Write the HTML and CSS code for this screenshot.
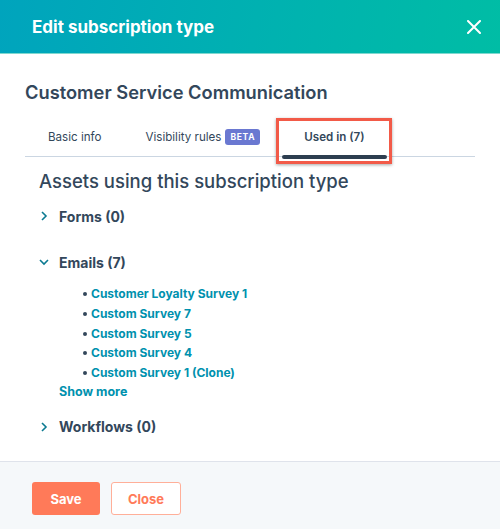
FILE: index.html
```html
<!DOCTYPE html>
<html lang="en">
<head>
  <meta charset="UTF-8">
  <title>Edit subscription type</title>
  <link rel="stylesheet" href="styles.css">
</head>
<body>
  <div class="modal">
    <div class="modal-header">
      <h1 class="modal-title">Edit subscription type</h1>
      <a class="close-btn" href="javascript:;">
        <svg width="14" height="14" viewBox="0 0 14 14"><path d="M1 1L13 13M13 1L1 13" stroke="#fff" stroke-width="2" stroke-linecap="round"/></svg>
      </a>
    </div>
    <div class="modal-body">
      <h2 class="type-name">Customer Service Communication</h2>
      <div class="tabs">
        <a class="tab" href="javascript:;">Basic info</a>
        <a class="tab" href="javascript:;">Visibility rules <span class="badge">BETA</span></a>
        <a class="tab active" href="javascript:;">Used in (7)<span class="highlight"></span></a>
      </div>
      <div class="assets">
        <h3 class="assets-title">Assets using this subscription type</h3>
        <div class="section">
          <div class="section-head">
            <svg class="chevron" width="10" height="10" viewBox="0 0 10 10"><path d="M3 1L7 5L3 9" fill="none" stroke="#0b7a91" stroke-width="1.6"/></svg>
            Forms (0)
          </div>
        </div>
        <div class="section open">
          <div class="section-head">
            <svg class="chevron" width="10" height="10" viewBox="0 0 10 10"><path d="M1 3L5 7L9 3" fill="none" stroke="#0b7a91" stroke-width="1.6"/></svg>
            Emails (7)
          </div>
          <ul class="asset-list">
            <li><a href="javascript:;">Customer Loyalty Survey 1</a></li>
            <li><a href="javascript:;">Custom Survey 7</a></li>
            <li><a href="javascript:;">Custom Survey 5</a></li>
            <li><a href="javascript:;">Custom Survey 4</a></li>
            <li><a href="javascript:;">Custom Survey 1 (Clone)</a></li>
          </ul>
          <a class="show-more" href="javascript:;">Show more</a>
        </div>
        <div class="section">
          <div class="section-head">
            <svg class="chevron" width="10" height="10" viewBox="0 0 10 10"><path d="M3 1L7 5L3 9" fill="none" stroke="#0b7a91" stroke-width="1.6"/></svg>
            Workflows (0)
          </div>
        </div>
      </div>
    </div>
    <div class="modal-footer">
      <a class="btn btn-primary" href="javascript:;">Save</a>
      <a class="btn btn-secondary" href="javascript:;">Close</a>
    </div>
  </div>
</body>
</html>
```

FILE: styles.css
```css
*{
  margin: 0;
  padding: 0;
  box-sizing: border-box;
}
body{
  font-family: Inter, "Open Sans", sans-serif;
  color: #33475b;
  background: #fff;
}
a{
  text-decoration: none;
}
.modal{
  width: 500px;
  height: 529px;
  display: flex;
  flex-direction: column;
}
.modal-header{
  height: 54px;
  display: flex;
  align-items: center;
  justify-content: space-between;
  padding: 0 19px 0 32px;
  background: linear-gradient(100deg, #00a4bd 0%, #00b2b0 55%, #00bda5 100%);
  border-bottom: 1px solid #7fd8cf;
}
.modal-title{
  font-size: 17px;
  font-weight: 700;
  color: #fff;
}
.close-btn{
  display: flex;
}
.modal-body{
  flex: 1;
  padding: 26px 25px 0;
}
.type-name{
  font-size: 18.3px;
  font-weight: 600;
  line-height: 24px;
}
.tabs{
  display: flex;
  height: 40px;
  margin-top: 13px;
  border-bottom: 1px solid #cbd6e2;
}
.tab{
  display: flex;
  align-items: center;
  padding: 0 22px;
  font-size: 11.6px;
  color: #33475b;
  position: relative;
}
.tab:first-child{
  padding-left: 23px;
}
.tab.active{
  font-weight: 600;
}
.tab.active:after{
  content: "";
  position: absolute;
  left: 0;
  right: 0;
  bottom: -3px;
  height: 4px;
  border-radius: 2px;
  background: #2d3e50;
}
.badge{
  display: inline-block;
  margin-left: 4px;
  padding: 0 5px;
  height: 16px;
  line-height: 16px;
  border-radius: 3px;
  background: #6a78d1;
  color: #fff;
  font-size: 8.5px;
  font-weight: 700;
  letter-spacing: 0.7px;
}
/* annotation box round the active tab */
.highlight{
  position: absolute;
  top: 1px;
  left: -6px;
  right: -5px;
  bottom: -8px;
  border: 3px solid #f25a48;
  box-shadow: 0 1px 3px rgba(0, 0, 0, 0.35);
}
.assets{
  padding-left: 14px;
}
.assets-title{
  margin-top: 12px;
  font-size: 18.5px;
  font-weight: 500;
  line-height: 24px;
}
.section-head{
  display: flex;
  align-items: center;
  height: 24px;
  font-size: 14px;
  font-weight: 700;
}
.chevron{
  margin: 0 10px 0 0;
}
.section:nth-child(2) .section-head{
  margin-top: 11px;
}
.section.open .section-head{
  margin-top: 22px;
}
.asset-list{
  margin: 10px 0 0 52px;
  list-style: none;
}
.asset-list li{
  position: relative;
  line-height: 19.75px;
  font-size: 12px;
  font-weight: 700;
}
.asset-list li:before{
  content: "";
  position: absolute;
  left: -8px;
  top: 8px;
  width: 4px;
  height: 4px;
  border-radius: 50%;
  background: #33475b;
}
.asset-list a, .show-more{
  color: #0091ae;
}
.show-more{
  display: block;
  margin-left: 20px;
  line-height: 18px;
  font-size: 12.5px;
  font-weight: 700;
}
.section.open + .section .section-head{
  margin-top: 14px;
}
.modal-footer{
  height: 68px;
  display: flex;
  gap: 11px;
  padding: 20px 32px 0;
  background: #f5f8fa;
  border-top: 1px solid #dfe3eb;
}
.btn{
  display: flex;
  align-items: center;
  justify-content: center;
  height: 33px;
  border-radius: 3px;
  font-size: 13px;
  font-weight: 700;
}
.btn-primary{
  width: 68px;
  background: #ff7a59;
  color: #fff;
}
.btn-secondary{
  width: 70px;
  background: #fff;
  border: 1px solid #ffaf99;
  color: #ff7a59;
}
```
